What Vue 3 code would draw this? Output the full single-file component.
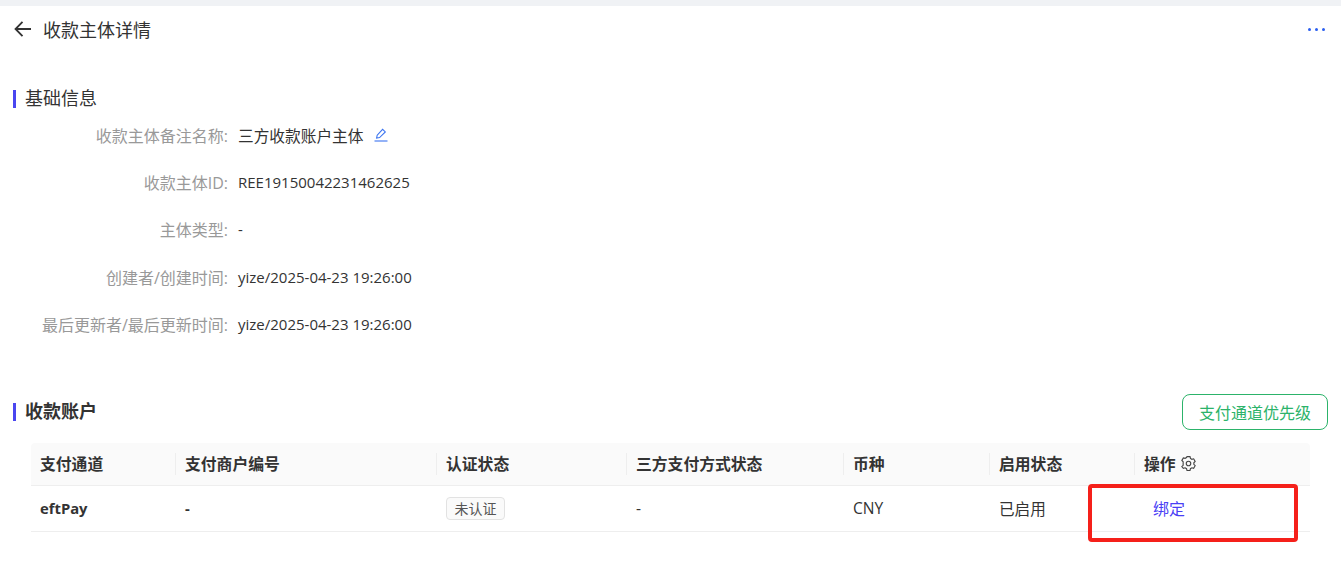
<script setup>
const infoRows = [
  { label: '收款主体备注名称:', value: '三方收款账户主体', editable: true },
  { label: '收款主体ID:', value: 'REE19150042231462625', latin: true },
  { label: '主体类型:', value: '-', latin: true },
  { label: '创建者/创建时间:', value: 'yize/2025-04-23 19:26:00', latin: true },
  { label: '最后更新者/最后更新时间:', value: 'yize/2025-04-23 19:26:00', latin: true }
]

const columns = ['支付通道', '支付商户编号', '认证状态', '三方支付方式状态', '币种', '启用状态']
</script>

<template>
  <div class="page">
    <div class="top-strip"></div>

    <header class="page-header">
      <div class="page-title">
        <svg class="back-icon" width="18" height="18" viewBox="0 0 18 18" fill="none" stroke="#333" stroke-width="1.8">
          <path d="M17 9H1.500M8.500 1.800 1.500 9l7 7.200" />
        </svg>
        <span>收款主体详情</span>
      </div>
      <div class="more"><i></i><i></i><i></i></div>
    </header>

    <section class="info">
      <h2 class="section-title">基础信息</h2>
      <div class="info-list">
        <div v-for="row in infoRows" :key="row.label" class="info-row">
          <span class="info-label">{{ row.label }}</span>
          <span class="info-value" :class="{ 'info-value--latin': row.latin }">{{ row.value }}</span>
          <svg v-if="row.editable" class="edit-icon" width="14" height="14" viewBox="0 0 14 14" fill="none" stroke="#3b74f0" stroke-width="1.1">
            <path d="M2.600 10 3.200 7.200 8.600 1.400 11.300 3.900 5.600 9.600Z" />
            <path d="M.5 13h13" />
          </svg>
        </div>
      </div>
    </section>

    <section class="accounts">
      <div class="accounts-head">
        <h2 class="section-title section-title--bold">收款账户</h2>
        <button class="priority-btn">支付通道优先级</button>
      </div>

      <div class="table">
        <div class="table-row table-row--head">
          <div v-for="col in columns" :key="col" class="cell cell--head">{{ col }}</div>
          <div class="cell cell--head cell--last">
            操作
            <svg class="gear-icon" width="15" height="15" viewBox="0 0 16 16" fill="none" stroke="#444" stroke-width="1.2">
              <path d="M6.400 1.200h3.200l.5 1.900 1.500.9 1.900-.5 1.600 2.800-1.400 1.400v1.700l1.400 1.400-1.600 2.800-1.900-.5-1.500.9-.5 1.900H6.400l-.5-1.900-1.500-.9-1.900.5L.9 11.800l1.400-1.400V6.700L.9 5.300l1.600-2.800 1.900.5 1.500-.9Z" transform="translate(0 -.5)" />
              <circle cx="8" cy="8" r="2.400" />
            </svg>
          </div>
        </div>
        <div class="table-row">
          <div class="cell cell--bold">eftPay</div>
          <div class="cell cell--bold">-</div>
          <div class="cell"><span class="tag">未认证</span></div>
          <div class="cell">-</div>
          <div class="cell">CNY</div>
          <div class="cell">已启用</div>
          <div class="cell cell--action">
            <a class="link">绑定</a>
            <div class="highlight"></div>
          </div>
        </div>
      </div>
    </section>
  </div>
</template>

<style>
html,
body {
  margin: 0;
  background: #fff;
}
</style>

<style scoped>
.page {
  width: 1341px;
  height: 561px;
  overflow: hidden;
  background: #fff;
  color: #333;
  font-family: "Open Sans", "Noto Sans CJK SC", sans-serif;
}

.top-strip {
  height: 6px;
  background: #f0f2f5;
}

.page-header {
  height: 46px;
  padding: 0 14px;
  display: flex;
  align-items: center;
  justify-content: space-between;
}

.page-title {
  display: flex;
  align-items: center;
  gap: 11px;
  font-size: 18px;
  color: #333;
}

.more {
  display: flex;
  gap: 4px;
  margin-right: 2px;
}

.more i {
  width: 3px;
  height: 3px;
  border-radius: 50%;
  background: #2b5ff0;
}

.info {
  padding: 38px 13px 0;
}

.section-title {
  margin: 0;
  height: 18px;
  line-height: 17px;
  padding-left: 9px;
  border-left: 3px solid #4a46f0;
  font-size: 18px;
  font-weight: 400;
  color: #333;
}

.section-title--bold {
  font-weight: 700;
}

.info-list {
  margin-top: 15px;
  display: flex;
  flex-direction: column;
  gap: 23.2px;
}

.info-row {
  display: flex;
  align-items: center;
  height: 24px;
  font-size: 15.7px;
}

.info-label {
  width: 215px;
  text-align: right;
  color: #999;
  font-size: 16px;
  white-space: nowrap;
}

.info-value {
  margin-left: 10px;
  color: #333;
  white-space: nowrap;
}

.info-value--latin {
  font-size: 15px;
}

.edit-icon {
  margin-left: 10px;
}

.accounts {
  padding: 58px 13px 0;
}

.accounts-head {
  display: flex;
  align-items: center;
  justify-content: space-between;
}

.priority-btn {
  width: 146px;
  height: 36px;
  padding: 0;
  border: 1px solid #2cb36a;
  border-radius: 8px;
  background: #fff;
  color: #2cb36a;
  font-family: inherit;
  font-size: 16px;
}

.table {
  margin: 13px 18px 0;
  width: 1279px;
  font-size: 15.6px;
}

.table-row {
  display: grid;
  grid-template-columns: 145px 261px 190px 217px 146px 145px 175px;
  height: 45px;
  border-bottom: 1px solid #eee;
}

.table-row--head {
  height: 42px;
  background: #fafafa;
  border-radius: 4px 4px 0 0;
}

.cell {
  position: relative;
  display: flex;
  align-items: center;
  padding: 0 9px;
  white-space: nowrap;
}

.cell--head {
  font-size: 15.8px;
  font-weight: 700;
  color: #333;
}

.cell--head:not(.cell--last)::after {
  content: "";
  position: absolute;
  right: 0;
  top: 10px;
  bottom: 10px;
  width: 1px;
  background: #eee;
}

.gear-icon {
  margin-left: 5px;
}

.cell--bold {
  font-size: 14.8px;
  font-weight: 700;
}

.tag {
  display: inline-block;
  height: 21px;
  line-height: 21px;
  padding: 0 7.5px;
  border: 1px solid #e2e2e2;
  border-radius: 4px;
  background: #fafafa;
  font-size: 14px;
  color: #555;
}

.cell--action {
  padding-left: 18px;
}

.link {
  color: #4a3ff5;
  font-size: 16px;
}

.highlight {
  position: absolute;
  left: -47px;
  top: -2px;
  width: 210px;
  height: 58px;
  box-sizing: border-box;
  border: 4px solid #f5201a;
  border-radius: 4px;
  pointer-events: none;
}
</style>
